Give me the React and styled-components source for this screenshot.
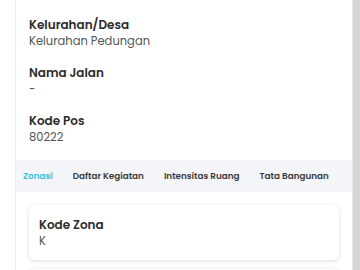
import React from 'react';
import styled, { createGlobalStyle } from 'styled-components';

const GlobalStyle = createGlobalStyle`
  * { box-sizing: border-box; }
  body {
    margin: 0;
    background: #fff;
    font-family: Poppins, 'Inter', 'Noto Sans', sans-serif;
  }
`;

const Page = styled.div`
  display: flex;
  height: 270px;
  overflow: hidden;
  padding-left: 15px;
`;

const Panel = styled.div`
  flex: 1;
  border-left: 1px solid #ececec;
  padding-top: 17px;
  overflow: hidden;
`;

const Scrollbar = styled.div`
  width: 8px;
  background: #d5d5d5;
  border-left: 1px solid #e6e6e6;
`;

const InfoList = styled.div`
  display: flex;
  flex-direction: column;
  row-gap: 16px;
  padding-left: 13px;
`;

const Item = styled.div`
  display: flex;
  flex-direction: column;
`;

const Label = styled.div`
  font-size: 12px;
  line-height: 16px;
  font-weight: 600;
  color: #2b2b2b;
`;

const Value = styled.div`
  font-size: 11.5px;
  line-height: 16px;
  color: #555;
`;

const TabBar = styled.div`
  display: flex;
  align-items: center;
  column-gap: 20px;
  height: 32px;
  margin-top: 15px;
  padding-left: 7px;
  background: #f4f5f8;
`;

const Tab = styled.div`
  font-size: 8.8px;
  font-weight: 600;
  color: ${({ active }) => (active ? '#2ec4de' : '#3a3a3a')};
  white-space: nowrap;
`;

const Cards = styled.div`
  display: flex;
  flex-direction: column;
  row-gap: 9px;
  padding: 13px 13px 0;
`;

const Card = styled.div`
  background: #fff;
  border-radius: 6px;
  padding: 12px 10px 11px;
  min-height: 55px;
  box-shadow: 0 1px 4px rgba(0, 0, 0, 0.14);
`;

const info = [
  { label: 'Kelurahan/Desa', value: 'Kelurahan Pedungan' },
  { label: 'Nama Jalan', value: '-' },
  { label: 'Kode Pos', value: '80222' },
];

const tabs = ['Zonasi', 'Daftar Kegiatan', 'Intensitas Ruang', 'Tata Bangunan'];

const App = () => (
  <>
    <GlobalStyle />
    <Page>
      <Panel>
        <InfoList>
          {info.map((it) => (
            <Item key={it.label}>
              <Label>{it.label}</Label>
              <Value>{it.value}</Value>
            </Item>
          ))}
        </InfoList>
        <TabBar>
          {tabs.map((t, i) => (
            <Tab key={t} active={i === 0}>
              {t}
            </Tab>
          ))}
        </TabBar>
        <Cards>
          <Card>
            <Label>Kode Zona</Label>
            <Value>K</Value>
          </Card>
          <Card />
        </Cards>
      </Panel>
      <Scrollbar />
    </Page>
  </>
);

export default App;
